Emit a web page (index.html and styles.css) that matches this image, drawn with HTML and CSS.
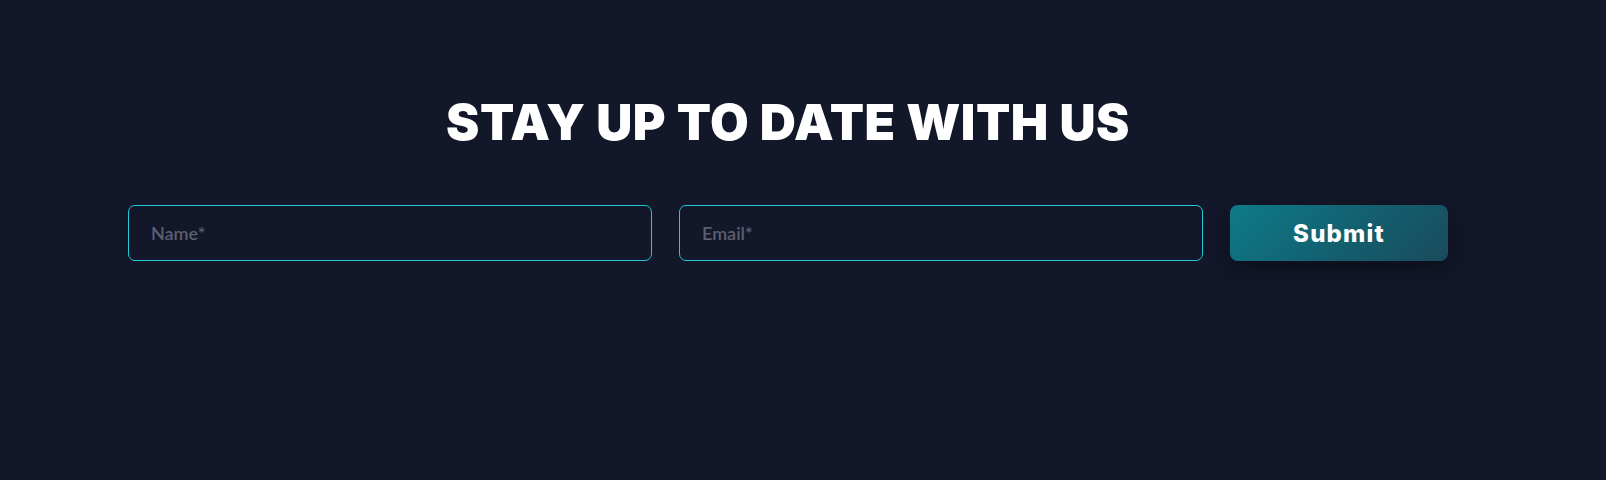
FILE: index.html
```html
<!DOCTYPE html>
<html lang="en">
<head>
<meta charset="utf-8">
<title>Newsletter</title>
<link rel="stylesheet" href="styles.css">
</head>
<body>
<section class="newsletter">
  <div class="container">
    <h2 class="title">STAY UP TO DATE WITH US</h2>
    <form class="form">
      <input class="field" type="text" placeholder="Name*">
      <input class="field" type="email" placeholder="Email*">
      <button class="submit" type="button">Submit</button>
    </form>
  </div>
</section>
</body>
</html>
```

FILE: styles.css
```css
html, body {
  margin: 0;
  padding: 0;
  background: #121729;
}
body {
  width: 1606px;
  height: 480px;
  overflow: hidden;
}
.newsletter {
  padding-top: 96px;
}
.container {
  width: 1320px;
  margin-left: 128px;
}
.title {
  margin: 0;
  text-align: center;
  color: #ffffff;
  font-family: Inter, "Liberation Sans", sans-serif;
  font-weight: 900;
  font-size: 50px;
  line-height: 53px;
  letter-spacing: 0.55px;
}
.form {
  margin-top: 56px;
  display: flex;
  gap: 27px;
}
.field {
  box-sizing: border-box;
  width: 524px;
  height: 56px;
  background: transparent;
  border: 1px solid #22c8d6;
  border-radius: 7px;
  padding: 0 22px;
  font-family: Lato, "Noto Sans", sans-serif;
  font-size: 18px;
  color: #ffffff;
  outline: none;
}
.field::placeholder {
  color: #5c5f70;
  font-weight: 600;
}
.submit {
  width: 218px;
  height: 56px;
  border: none;
  border-radius: 8px;
  background: linear-gradient(135deg, #0e7a88 0%, #135f6f 55%, #1a4b5c 100%);
  box-shadow: 0 8px 22px rgba(0, 0, 0, 0.35);
  color: #ffffff;
  font-family: Inter, "Liberation Sans", sans-serif;
  font-weight: 800;
  font-size: 24px;
  letter-spacing: 1.2px;
  cursor: pointer;
}
```
